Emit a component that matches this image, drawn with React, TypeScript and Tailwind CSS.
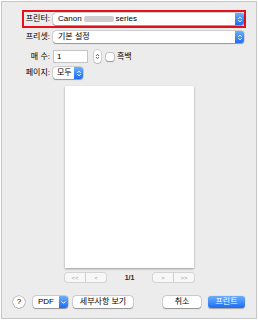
function Chevrons({ className }: { className?: string }) {
  return (
    <svg viewBox="0 0 6 10" className={className} fill="none" stroke="currentColor" strokeWidth="1.1" strokeLinecap="round" strokeLinejoin="round">
      <path d="M1.5 4 L3 2.4 L4.5 4" />
      <path d="M1.5 6 L3 7.6 L4.5 6" />
    </svg>
  );
}

function BlueStep({ className = '' }: { className?: string }) {
  return (
    <div className={`flex items-center justify-center rounded-r-[3px] bg-linear-to-b from-[#6aaefb] to-[#1a6cf1] text-white ${className}`}>
      <Chevrons className="h-[9px] w-[6px]" />
    </div>
  );
}

function PopUp({ className = '', children }: { className?: string; children: React.ReactNode }) {
  return (
    <div className={`flex h-[12px] items-stretch rounded-[3px] bg-white shadow-[0_0_0_0.5px_rgba(0,0,0,0.2),0_0.5px_1px_rgba(0,0,0,0.3)] ${className}`}>
      <div className="flex flex-1 items-center overflow-hidden whitespace-nowrap">{children}</div>
      <BlueStep className="w-[9px]" />
    </div>
  );
}

function Button({ className = '', children }: { className?: string; children: React.ReactNode }) {
  return (
    <div className={`flex h-[12px] items-center justify-center rounded-[3px] bg-white shadow-[0_0_0_0.5px_rgba(0,0,0,0.22),0_0.5px_1px_rgba(0,0,0,0.3)] ${className}`}>
      {children}
    </div>
  );
}

export default function App() {
  return (
    <div className="h-[322px] w-[258px] bg-white p-px font-['Liberation_Sans','Noto_Sans_CJK_KR',sans-serif] text-[8px] leading-none text-black">
      <div className="flex h-[318px] w-[256px] flex-col border border-[#c6c6c6] bg-[#ececec]">
        {/* Printer */}
        <div className="ml-[20px] mt-[8px] flex h-[18px] w-[224px] items-center border-2 border-[#e8101b]">
          <span className="w-[26px] text-right">프린터:</span>
          <PopUp className="ml-[3px] w-[191px]">
            <span className="pl-[5px]">Canon</span>
            <span className="mx-[2px] h-[6px] w-[30px] rounded-[2px] bg-[#cdcdcd]" />
            <span>series</span>
          </PopUp>
        </div>

        {/* Preset */}
        <div className="ml-[20px] mt-[3px] flex h-[12px] items-center">
          <span className="w-[28px] text-right">프리셋:</span>
          <PopUp className="ml-[3px] w-[191px]">
            <span className="pl-[5px]">기본 설정</span>
          </PopUp>
        </div>

        {/* Copies */}
        <div className="ml-[20px] mt-[7px] flex h-[13px] items-center">
          <span className="w-[28px] text-right">매 수:</span>
          <div className="ml-[3px] flex h-[13px] w-[35px] items-center border border-[#c4c4c4] bg-white pl-[3px]">1</div>
          <div className="ml-[6px] flex h-[13px] w-[7px] items-center justify-center rounded-[3px] bg-white text-[#555] shadow-[0_0_0_0.5px_rgba(0,0,0,0.2),0_0.5px_1px_rgba(0,0,0,0.25)]">
            <Chevrons className="h-[9px] w-[5px]" />
          </div>
          <div className="ml-[5px] h-[8px] w-[8px] rounded-[2px] bg-white shadow-[0_0_0_0.5px_rgba(0,0,0,0.3),0_0.5px_1px_rgba(0,0,0,0.25)]" />
          <span className="ml-[3px]">흑백</span>
        </div>

        {/* Pages */}
        <div className="ml-[20px] mt-[4px] flex h-[12px] items-center">
          <span className="w-[28px] text-right">페이지:</span>
          <PopUp className="ml-[3px] w-[30px]">
            <span className="pl-[4px]">모두</span>
          </PopUp>
        </div>

        {/* Preview */}
        <div className="ml-[63px] mt-[7px] h-[182px] w-[129px] bg-white shadow-[0_1px_2px_rgba(0,0,0,0.35)]" />

        {/* Page nav */}
        <div className="ml-[63px] mt-[5px] flex h-[9px] w-[129px] items-center justify-between text-[#9c9c9c]">
          <div className="flex h-[9px] w-[41px] rounded-[2px] bg-[#f7f7f7] shadow-[0_0_0_0.5px_rgba(0,0,0,0.2)]">
            <span className="flex flex-1 items-center justify-center border-r border-[#d0d0d0] text-[6px]">&lt;&lt;</span>
            <span className="flex flex-1 items-center justify-center text-[6px]">&lt;</span>
          </div>
          <span className="text-[7px] font-bold text-[#2a2a2a]">1/1</span>
          <div className="flex h-[9px] w-[41px] rounded-[2px] bg-[#f7f7f7] shadow-[0_0_0_0.5px_rgba(0,0,0,0.2)]">
            <span className="flex flex-1 items-center justify-center border-r border-[#d0d0d0] text-[6px]">&gt;</span>
            <span className="flex flex-1 items-center justify-center text-[6px]">&gt;&gt;</span>
          </div>
        </div>

        {/* Bottom buttons */}
        <div className="ml-[11px] mr-[11px] mt-[14px] flex h-[12px] items-center">
          <div className="flex h-[12px] w-[12px] items-center justify-center rounded-full bg-white text-[8px] shadow-[0_0_0_0.5px_rgba(0,0,0,0.3),0_0.5px_1px_rgba(0,0,0,0.3)]">?</div>
          <div className="ml-[8px] flex h-[12px] w-[35px] items-stretch rounded-[3px] bg-white shadow-[0_0_0_0.5px_rgba(0,0,0,0.22),0_0.5px_1px_rgba(0,0,0,0.3)]">
            <span className="flex flex-1 items-center justify-center">PDF</span>
            <div className="flex w-[9px] items-center justify-center rounded-r-[3px] bg-linear-to-b from-[#6aaefb] to-[#1a6cf1] text-white">
              <svg viewBox="0 0 6 6" className="h-[5px] w-[5px]" fill="none" stroke="currentColor" strokeWidth="1.2" strokeLinecap="round" strokeLinejoin="round">
                <path d="M1 2 L3 4 L5 2" />
              </svg>
            </div>
          </div>
          <Button className="ml-[5px] w-[60px]">세부사항 보기</Button>
          <div className="flex-1" />
          <Button className="w-[38px]">취소</Button>
          <div className="ml-[7px] flex h-[12px] w-[37px] items-center justify-center rounded-[3px] bg-linear-to-b from-[#6aaefb] to-[#1a6cf1] text-white shadow-[0_0.5px_1px_rgba(0,0,0,0.3)]">
            프린트
          </div>
        </div>
      </div>
    </div>
  );
}
